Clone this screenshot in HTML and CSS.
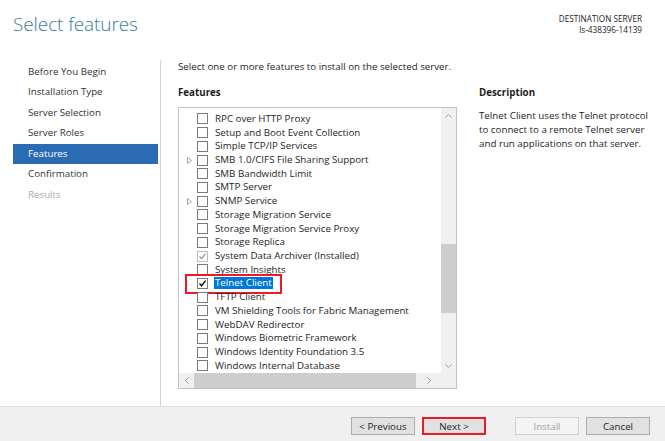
FILE: index.html
```html
<!DOCTYPE html>
<html>
<head>
<meta charset="utf-8">
<link rel="stylesheet" href="styles.css">
</head>
<body>
<div class="wizard">
  <header class="head">
    <h1 class="title">Select features</h1>
    <div class="dest">
      <div>DESTINATION SERVER</div>
      <div>ls-438396-14139</div>
    </div>
  </header>
  <div class="main">
    <nav class="nav">
      <div class="nav-item">Before You Begin</div>
      <div class="nav-item">Installation Type</div>
      <div class="nav-item">Server Selection</div>
      <div class="nav-item">Server Roles</div>
      <div class="nav-item active">Features</div>
      <div class="nav-item">Confirmation</div>
      <div class="nav-item disabled">Results</div>
    </nav>
    <section class="content">
      <p class="intro">Select one or more features to install on the selected server.</p>
      <div class="cols">
        <div class="features">
          <h2 class="colhead">Features</h2>
          <div class="listbox">
            <div class="listarea">
              <div class="rows">
                <div class="row"><span class="exp"></span><span class="cb"></span><span class="lbl">RPC over HTTP Proxy</span></div>
                <div class="row"><span class="exp"></span><span class="cb"></span><span class="lbl">Setup and Boot Event Collection</span></div>
                <div class="row"><span class="exp"></span><span class="cb"></span><span class="lbl">Simple TCP/IP Services</span></div>
                <div class="row"><span class="exp"><svg width="5" height="7" viewBox="0 0 5 7"><path d="M0.5 0.5 L4.5 3.5 L0.5 6.5 Z" fill="none" stroke="#a6a6a6" stroke-width="1"/></svg></span><span class="cb"></span><span class="lbl">SMB 1.0/CIFS File Sharing Support</span></div>
                <div class="row"><span class="exp"></span><span class="cb"></span><span class="lbl">SMB Bandwidth Limit</span></div>
                <div class="row"><span class="exp"></span><span class="cb"></span><span class="lbl">SMTP Server</span></div>
                <div class="row"><span class="exp"><svg width="5" height="7" viewBox="0 0 5 7"><path d="M0.5 0.5 L4.5 3.5 L0.5 6.5 Z" fill="none" stroke="#a6a6a6" stroke-width="1"/></svg></span><span class="cb"></span><span class="lbl">SNMP Service</span></div>
                <div class="row"><span class="exp"></span><span class="cb"></span><span class="lbl">Storage Migration Service</span></div>
                <div class="row"><span class="exp"></span><span class="cb"></span><span class="lbl">Storage Migration Service Proxy</span></div>
                <div class="row"><span class="exp"></span><span class="cb"></span><span class="lbl">Storage Replica</span></div>
                <div class="row"><span class="exp"></span><span class="cb cb-dis"><svg width="9" height="9" viewBox="0 0 9 9"><path d="M1.5 4.5 L3.6 6.8 L7.6 1.6" fill="none" stroke="#9a9a9a" stroke-width="1.3"/></svg></span><span class="lbl">System Data Archiver (Installed)</span></div>
                <div class="row"><span class="exp"></span><span class="cb"></span><span class="lbl">System Insights</span></div>
                <div class="row row-sel"><span class="exp"></span><span class="cb cb-on"><svg width="9" height="9" viewBox="0 0 9 9"><path d="M1.5 4.5 L3.6 6.8 L7.6 1.6" fill="none" stroke="#111" stroke-width="1.4"/></svg></span><span class="lbl sel">Telnet Client</span><span class="mark"></span></div>
                <div class="row"><span class="exp"></span><span class="cb"></span><span class="lbl">TFTP Client</span></div>
                <div class="row"><span class="exp"></span><span class="cb"></span><span class="lbl">VM Shielding Tools for Fabric Management</span></div>
                <div class="row"><span class="exp"></span><span class="cb"></span><span class="lbl">WebDAV Redirector</span></div>
                <div class="row"><span class="exp"></span><span class="cb"></span><span class="lbl">Windows Biometric Framework</span></div>
                <div class="row"><span class="exp"></span><span class="cb"></span><span class="lbl">Windows Identity Foundation 3.5</span></div>
                <div class="row"><span class="exp"></span><span class="cb"></span><span class="lbl">Windows Internal Database</span></div>
              </div>
              <div class="vscroll">
                <span class="arrow"><svg width="7" height="4" viewBox="0 0 7 4"><path d="M0.5 3.5 L3.5 0.5 L6.5 3.5" fill="none" stroke="#a0a0a0" stroke-width="1"/></svg></span>
                <div class="vtrack"><div class="vthumb"></div></div>
                <span class="arrow"><svg width="7" height="4" viewBox="0 0 7 4"><path d="M0.5 0.5 L3.5 3.5 L6.5 0.5" fill="none" stroke="#a0a0a0" stroke-width="1"/></svg></span>
              </div>
            </div>
            <div class="hscroll">
              <span class="harrow"><svg width="4" height="7" viewBox="0 0 4 7"><path d="M3.5 0.5 L0.5 3.5 L3.5 6.5" fill="none" stroke="#a0a0a0" stroke-width="1"/></svg></span>
              <div class="hthumb"></div>
              <span class="harrow harrow-r"><svg width="4" height="7" viewBox="0 0 4 7"><path d="M0.5 0.5 L3.5 3.5 L0.5 6.5" fill="none" stroke="#a0a0a0" stroke-width="1"/></svg></span>
              <span class="corner"></span>
            </div>
          </div>
        </div>
        <div class="desc">
          <h2 class="colhead">Description</h2>
          <p class="desc-text">Telnet Client uses the Telnet protocol to connect to a remote Telnet server and run applications on that server.</p>
        </div>
      </div>
    </section>
  </div>
  <footer class="foot">
    <button class="btn">&lt; Previous</button>
    <button class="btn btn-next">Next &gt;</button>
    <button class="btn btn-dis btn-install">Install</button>
    <button class="btn">Cancel</button>
  </footer>
</div>
</body>
</html>
```
FILE: styles.css
```css
* { box-sizing: border-box; }
html, body { margin: 0; padding: 0; background: #fff; }
body {
  font-family: "Open Sans", "Noto Sans", "DejaVu Sans", sans-serif;
  font-size: 9.75px;
  color: #1e1e1e;
}
.wizard {
  width: 665px;
  height: 441px;
  display: flex;
  flex-direction: column;
  overflow: hidden;
}
.head {
  height: 60px;
  display: flex;
  justify-content: space-between;
  padding: 0 23px 0 13px;
}
.title {
  margin: 11px 0 0;
  font-size: 19px;
  font-weight: 300;
  color: #3b7c9e;
  line-height: 26px;
  letter-spacing: -0.1px;
}
.dest {
  margin-top: 13px;
  text-align: right;
  font-size: 8.2px;
  line-height: 11px;
  color: #222;
}
.main {
  height: 346px;
  display: flex;
}
.nav {
  width: 161px;
  border-right: 1px solid #d4d4d4;
  padding: 1.5px 2px 0 13px;
}
.nav-item {
  height: 20.5px;
  line-height: 20.5px;
  padding-left: 15px;
  color: #333;
}
.nav-item.active {
  background: #2b6bb3;
  color: #fff;
}
.nav-item.disabled { color: #aaa; }
.content {
  flex: 1;
  padding: 0 0 0 17px;
}
.intro {
  margin: 0;
  line-height: 13px;
  height: 26px;
}
.cols {
  display: flex;
}
.features { width: 279px; }
.colhead {
  margin: 0;
  font-size: 9.75px;
  font-weight: 700;
  line-height: 13px;
  height: 21px;
}
.listbox {
  width: 279px;
  height: 282px;
  border: 1px solid #c3c3c3;
  display: flex;
  flex-direction: column;
}
.listarea {
  height: 265px;
  display: flex;
}
.rows {
  flex: 1;
  padding-top: 4px;
  overflow: hidden;
}
.row {
  position: relative;
  height: 13.72px;
  display: flex;
  align-items: center;
  white-space: nowrap;
}
.exp {
  width: 18px;
  height: 13px;
  display: flex;
  align-items: center;
  padding-left: 8px;
}
.cb {
  width: 11px;
  height: 11px;
  border: 1px solid #7a7a7a;
  background: #fff;
  display: flex;
  align-items: center;
  justify-content: center;
  flex: none;
}
.cb-dis { border-color: #bcbcbc; }
.lbl {
  margin-left: 7px;
  line-height: 12px;
}
.lbl.sel {
  background: #0078d7;
  color: #fff;
  padding: 0 1px;
  margin-left: 6px;
}
.mark {
  position: absolute;
  left: 6px;
  top: -3px;
  width: 97px;
  height: 20px;
  border: 2px solid #ec1c24;
}
.vscroll {
  width: 15px;
  background: #f0f0f0;
  display: flex;
  flex-direction: column;
}
.arrow {
  height: 15px;
  display: flex;
  align-items: center;
  justify-content: center;
  flex: none;
}
.vtrack {
  flex: 1;
  position: relative;
}
.vthumb {
  margin-top: 121px;
  height: 69px;
  background: #cdcdcd;
}
.hscroll {
  height: 15px;
  display: flex;
  background: #f0f0f0;
}
.harrow {
  width: 15px;
  display: flex;
  align-items: center;
  justify-content: center;
}
.harrow-r { width: 25px; }
.hthumb {
  flex: 1;
  background: #cdcdcd;
}
.corner {
  width: 15px;
  background: #f0f0f0;
}
.desc {
  margin-left: 22px;
  width: 180px;
}
.desc-text {
  margin: 2px 0 0;
  line-height: 14px;
}
.foot {
  flex: 1;
  background: #f0f0f0;
  border-top: 1px solid #dcdcdc;
  display: flex;
  align-items: flex-start;
  justify-content: flex-end;
  padding: 10px 15px 0 0;
  gap: 7px;
}
.btn {
  width: 64px;
  height: 18px;
  font-family: inherit;
  font-size: 9.75px;
  color: #1e1e1e;
  background: #e1e1e1;
  border: 1px solid #adadad;
  padding: 0;
  margin: 0;
}
.btn-next { border: 2px solid #ec1c24; }
.btn-install { margin-left: 22px; }
.btn-dis {
  background: #f4f4f4;
  border-color: #d0d0d0;
  color: #a3a3a3;
}
```
